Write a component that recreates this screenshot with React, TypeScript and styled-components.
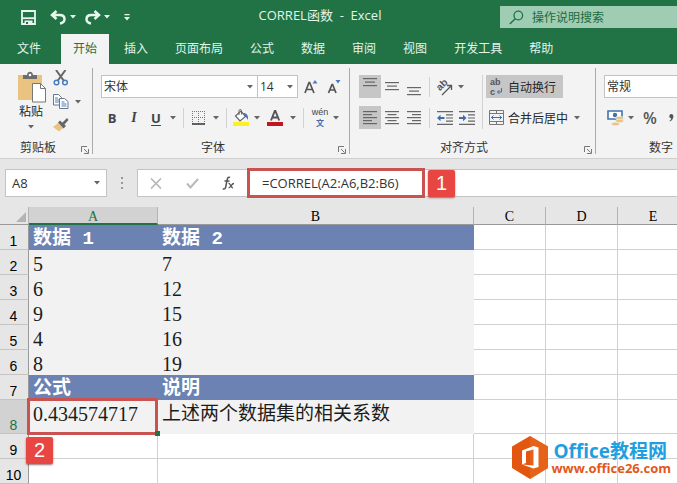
import React from "react";
import styled, { createGlobalStyle, css } from "styled-components";

const GREEN = "#217346";
const INK = "#444444";
const UI_FONT = '"Open Sans", "Noto Sans CJK SC", sans-serif';
const CELL_FONT = '"Liberation Serif", "Noto Sans CJK SC", serif';

const GlobalStyle = createGlobalStyle`
  *, *::before, *::after { box-sizing: border-box; }
  html, body { margin: 0; padding: 0; }
  body { background: #e6e6e6; font-family: ${UI_FONT}; font-size: 12px; color: #262626; overflow: hidden; }
  button, input, select { font: inherit; color: inherit; margin: 0; }
  button { border: 0; padding: 0; background: none; cursor: pointer; white-space: nowrap; }
  svg { display: block; flex: none; }
`;

/* ---------- layout ---------- */

const Window = styled.div`
  min-height: 100vh;
  display: flex;
  flex-direction: column;
  position: relative;
  overflow: hidden;
`;

const TitleBar = styled.header`
  display: flex;
  align-items: center;
  height: 34px;
  background: ${GREEN};
  color: #e4f5ea;
`;

const QuickAccess = styled.div`
  display: flex;
  align-items: center;
  width: 140px;
  padding-left: 21px;
  flex: none;
`;

const QuickButton = styled.button<{ $w: number; $gap?: number }>`
  display: flex;
  justify-content: center;
  width: ${(p) => p.$w}px;
  margin-right: ${(p) => p.$gap ?? 0}px;
  color: #e8f7ee;
`;

const DocTitle = styled.h1`
  flex: 1;
  margin: 0;
  padding-bottom: 4px;
  font-size: 13px;
  line-height: 18px;
  font-weight: 400;
  text-align: center;
  white-space: pre;
`;

const Search = styled.label`
  display: flex;
  align-items: center;
  gap: 8px;
  width: 177px;
  height: 22px;
  padding-left: 9px;
  flex: none;
  background: #9fcdb3;
  color: ${GREEN};
`;

const SearchInput = styled.input`
  flex: 1;
  min-width: 0;
  border: 0;
  padding: 0;
  background: none;
  outline: none;
  &::placeholder { color: #1d6a40; opacity: 1; }
`;

const Tabs = styled.nav`
  display: flex;
  gap: 3px;
  height: 30px;
  padding-left: 5px;
  background: ${GREEN};
`;

const Tab = styled.button<{ $active?: boolean; $file?: boolean }>`
  padding: 0 12px 2px;
  color: #e4f5ea;
  margin-right: ${(p) => (p.$file ? 5 : 0)}px;
  ${(p) => p.$active && css`background: #f3f3f3; color: ${GREEN};`}
`;

const Ribbon = styled.div`
  display: flex;
  height: 95px;
  background: #f3f3f3;
  border-bottom: 1px solid #cfcfcf;
  overflow: hidden;
`;

const Group = styled.section<{ $w: number }>`
  position: relative;
  display: flex;
  flex-direction: column;
  flex: none;
  width: ${(p) => p.$w}px;
  height: 94px;
  &::after {
    content: "";
    position: absolute;
    right: 0;
    top: 4px;
    bottom: 4px;
    width: 1px;
    background: #ababab;
  }
`;

const GroupBody = styled.div<{ $left: number; $row?: boolean }>`
  display: flex;
  flex-direction: ${(p) => (p.$row ? "row" : "column")};
  gap: ${(p) => (p.$row ? 0 : 8)}px;
  height: 74px;
  padding: ${(p) => (p.$row ? 6 : 11)}px 0 0 ${(p) => p.$left}px;
`;

const GroupFooter = styled.footer<{ $shift?: number }>`
  display: flex;
  align-items: center;
  justify-content: center;
  height: 18px;
  padding-right: ${(p) => p.$shift ?? 0}px;
  color: #333;
`;

const Launcher = styled.button`
  position: absolute;
  right: 4px;
  bottom: 4px;
`;

const Row = styled.div<{ $gap?: number; $h?: number }>`
  display: flex;
  align-items: center;
  gap: ${(p) => p.$gap ?? 0}px;
  height: ${(p) => p.$h ?? 23}px;
`;

const Column = styled.div<{ $w: number; $gap: number; $top?: number }>`
  display: flex;
  flex-direction: column;
  align-items: flex-start;
  width: ${(p) => p.$w}px;
  gap: ${(p) => p.$gap}px;
  padding-top: ${(p) => p.$top ?? 0}px;
`;

const PasteButton = styled.button`
  display: flex;
  flex-direction: column;
  align-items: center;
  width: 34px;
  line-height: 18px;
`;

const Tool = styled.button<{ $w?: number; $on?: boolean; $h?: number }>`
  display: flex;
  align-items: center;
  justify-content: center;
  flex: none;
  width: ${(p) => p.$w ?? 22}px;
  height: ${(p) => p.$h ?? 23}px;
  background: ${(p) => (p.$on ? "#c6c6c6" : "none")};
`;

const Glyph = styled.span<{ $style?: "bold" | "italic" | "underline" | "large" }>`
  font-size: 13px;
  line-height: 16px;
  color: ${INK};
  font-weight: 700;
  ${(p) => p.$style === "italic" && css`font-family: "Liberation Serif", serif; font-style: italic; font-size: 14px;`}
  ${(p) => p.$style === "underline" && css`text-decoration: underline; text-underline-offset: 2px;`}
  ${(p) => p.$style === "large" && css`font-size: 16px; font-weight: 600; color: #555;`}
`;

const TextTool = styled(Tool)`
  justify-content: flex-start;
  gap: 4px;
  padding-left: 3px;
`;

const Rule = styled.span<{ $h?: number; $m: number }>`
  flex: none;
  width: 1px;
  height: ${(p) => p.$h ?? 20}px;
  margin: 0 ${(p) => p.$m}px;
  background: #d2d2d2;
`;

const AlignColumns = styled.div`
  display: flex;
  height: 74px;
  padding: 11px 0 0 9px;
`;

const PickerShell = styled.span<{ $w: number; $joined?: boolean }>`
  position: relative;
  display: flex;
  flex: none;
  width: ${(p) => p.$w}px;
  height: 23px;
  border: 1px solid #c3c3c3;
  border-left-width: ${(p) => (p.$joined ? 0 : 1)}px;
  background: #fff;
  svg { position: absolute; right: 4px; top: 9px; pointer-events: none; }
`;

const PickerSelect = styled.select`
  appearance: none;
  width: 100%;
  border: 0;
  outline: 0;
  padding: 0 2px;
  background: none;
  color: #333;
`;

/* ---------- formula bar ---------- */

const FormulaRow = styled.div`
  display: flex;
  height: 48px;
  padding: 10px 0 10px 5px;
`;

const NameBox = styled.label`
  display: flex;
  align-items: center;
  width: 102px;
  flex: none;
  padding: 0 6px;
  border: 1px solid #c3c3c3;
  background: #fff;
`;

const NameInput = styled.input`
  flex: 1;
  min-width: 0;
  border: 0;
  padding: 0;
  outline: none;
  background: none;
  font-size: 13px;
  color: #333;
`;

const Grip = styled.span`
  display: flex;
  align-items: center;
  justify-content: center;
  width: 30px;
  flex: none;
`;

const FormulaBox = styled.div`
  position: relative;
  display: flex;
  align-items: center;
  flex: 1;
  border: 1px solid #c3c3c3;
  border-right: 0;
  background: #fff;
`;

const FormulaInput = styled.input`
  flex: 1;
  min-width: 0;
  height: 100%;
  border: 0;
  padding: 0 0 0 15px;
  outline: none;
  background: none;
  font-size: 13px;
  color: #333;
`;

/* ---------- annotations ---------- */

const frame = css`
  border: 3px solid #c95351;
  pointer-events: none;
  position: absolute;
  z-index: 2;
`;

const FormulaFrame = styled.div`
  ${frame}
  left: 109px;
  top: -2px;
  bottom: -2px;
  width: 178px;
`;

const CellFrame = styled.div`
  ${frame}
  left: -2px;
  right: -1px;
  top: -2px;
  bottom: -2px;
`;

const Badge = styled.span<{ $x: number; $y: number }>`
  position: absolute;
  z-index: 3;
  left: ${(p) => p.$x}px;
  top: ${(p) => p.$y}px;
  display: flex;
  align-items: center;
  justify-content: center;
  width: 27px;
  height: 27px;
  border-radius: 2px;
  background: #e74643;
  box-shadow: 0 1px 2px rgba(90, 20, 20, 0.6);
  color: #fff;
  font: 20px/27px "Liberation Sans", sans-serif;
`;

const FillHandle = styled.i`
  position: absolute;
  z-index: 3;
  right: -3px;
  bottom: -3px;
  width: 5px;
  height: 5px;
  background: ${GREEN};
`;

/* ---------- sheet ---------- */

const SheetArea = styled.main`
  position: relative;
  flex: 1;
  overflow: hidden;
  background: #fff;
`;

const Grid = styled.table`
  width: 100%;
  min-width: 689px;
  table-layout: fixed;
  border-collapse: separate;
  border-spacing: 0;
`;

const Col = styled.col<{ $w?: number }>`
  width: ${(p) => (p.$w ? `${p.$w}px` : "auto")};
`;

const ColHead = styled.th<{ $active?: boolean }>`
  height: 18px;
  padding: 3px 0 0;
  border-right: 1px solid #b4b4b4;
  border-bottom: 1px solid #999;
  background: #e6e6e6;
  font: 14px/14px ${CELL_FONT};
  color: #000;
  ${(p) => p.$active && css`background: #d2d2d2; color: ${GREEN}; border-bottom: 2px solid ${GREEN}; line-height: 13px;`}
`;

const Corner = styled(ColHead)`
  padding: 0 2px 2px 0;
  vertical-align: bottom;
  svg { margin-left: auto; }
`;

const RowHead = styled.th<{ $h: number; $active?: boolean }>`
  height: ${(p) => p.$h}px;
  padding: 0 1px 0 0;
  vertical-align: bottom;
  border-right: 1px solid #999;
  border-bottom: 1px solid #c4c4c4;
  background: ${(p) => (p.$active ? "#d2d2d2" : "#e6e6e6")};
  color: ${(p) => (p.$active ? GREEN : "#000")};
  font: 14px/15px "Liberation Sans", sans-serif;
`;

type Tone = "plain" | "head" | "body";

const Cell = styled.td<{ $tone: Tone; $small?: boolean }>`
  position: relative;
  padding: 0 0 0 4px;
  vertical-align: bottom;
  white-space: nowrap;
  font-family: ${CELL_FONT};
  font-size: ${(p) => (p.$small ? 19 : 20)}px;
  line-height: 20px;
  color: #1c1c1c;
  border-right: 1px solid #d0d0d0;
  border-bottom: 1px solid #d0d0d0;
  ${(p) => p.$tone === "body" && css`background: #f2f2f2; border-color: #f2f2f2;`}
  ${(p) =>
    p.$tone === "head" &&
    css`
      background: #6c82b3;
      border-color: #6c82b3;
      color: #fff;
      font-family: "Liberation Mono", "Noto Sans CJK SC", monospace;
      font-size: 19px;
      font-weight: 700;
    `}
`;

const TallCell = styled(Cell)`
  vertical-align: top;
  padding-top: 4px;
`;

const Watermark = styled.a`
  position: absolute;
  right: 6px;
  bottom: 5px;
  z-index: 4;
  display: flex;
  align-items: center;
  gap: 3px;
  text-decoration: none;
  font-family: "Open Sans", "Noto Sans CJK SC", sans-serif;
  font-weight: 700;
`;

const WatermarkText = styled.span`
  display: flex;
  flex-direction: column;
`;

const Brand = styled.span`
  font-size: 19px;
  line-height: 20px;
  color: #1f9fe0;
  padding-left: 2px;
`;

const Site = styled.span`
  font-size: 13px;
  line-height: 14px;
  color: #e2581a;
`;

/* ---------- icons ---------- */

const Caret = ({ color = "#666" }: { color?: string }) => (
  <svg width="6" height="4" viewBox="0 0 6 4" aria-hidden="true"><path d="M0 0h6L3 3.5z" fill={color} /></svg>
);

const SaveIcon = () => (
  <svg width="15" height="15" viewBox="0 0 15 15"><path d="M1 1h13v13H1z" fill="none" stroke="currentColor" strokeWidth="1.8" /><path d="M1 8.200h13" stroke="currentColor" strokeWidth="1.800" /><path d="M3.500 14v-3.500h8V14z" fill="currentColor" /><path d="M5 12h2v2H5z" fill={GREEN} /></svg>
);
const UndoIcon = ({ flip = false }: { flip?: boolean }) => (
  <svg width="16" height="15" viewBox="0 0 16 15"><g transform={flip ? "matrix(-1 0 0 1 16 0)" : undefined} fill="none" stroke="currentColor" strokeWidth="2.5"><path d="M6.500 1 2 5l4.500 4M2 5h7.500c3 0 5 1.500 5 4.200 0 2.600-2 3.800-4.500 4.300" /></g></svg>
);
const CustomizeIcon = () => (
  <svg width="6" height="7" viewBox="0 0 6 7"><path d="M.5 0h5v1.200h-5zM0 3h6L3 6.500z" fill="currentColor" /></svg>
);
const SearchIcon = () => (
  <svg width="15" height="15" viewBox="0 0 15 15"><circle cx="9.300" cy="5.500" r="4.300" fill="none" stroke="currentColor" strokeWidth="1.300" /><path d="M6.200 8.700.8 14" stroke="currentColor" strokeWidth="1.500" /></svg>
);
const LauncherIcon = () => (
  <svg width="8" height="8" viewBox="0 0 8 8" fill="none" stroke="#777"><path d="M.5 6V.5H6M3 3l3.500 3.500M7.500 3v4.500H3" /></svg>
);
const PasteIcon = () => (
  <svg width="29" height="32" viewBox="0 0 29 32"><path d="M1 4h24v25H1z" fill="#eac282" /><path d="M6 8V4h4c0-4.500 6-4.500 6 0h4v4z" fill="#6d6d6d" /><circle cx="13" cy="4" r="1.300" fill="#fff" /><path d="M15.500 12.500h8l5 5v13.500h-13z" fill="#fff" stroke="#777" /><path d="M23.500 12.500v5h5" fill="none" stroke="#777" /></svg>
);
const CutIcon = () => (
  <svg width="16" height="16" viewBox="0 0 16 16" fill="none"><path d="m3 0 8 11M12.500 0l-8 11" stroke="#666" strokeWidth="2" /><circle cx="3.500" cy="12.500" r="2.300" stroke="#4a7ebb" strokeWidth="1.500" /><circle cx="12" cy="12.500" r="2.300" stroke="#4a7ebb" strokeWidth="1.500" /></svg>
);
const CopyIcon = () => (
  <svg width="16" height="15" viewBox="0 0 16 15" stroke="#6b7786"><path d="M.5.500h5l3 3v7.500h-8z" fill="#fff" /><path d="M2 4h3M2 6h4M2 8h4" stroke="#4a7ebb" /><path d="M6.500 4.500h5l3.500 3v7h-8.500z" fill="#fff" /><path d="M8.500 8h3M8.500 10h5M8.500 12h5" stroke="#4a7ebb" /></svg>
);
const BrushIcon = () => (
  <svg width="16" height="15" viewBox="0 0 16 15"><path d="m0 10 5-4 5 5-4 3.500z" fill="#eac282" /><path d="m5 5.500 2-2 6 5.500-2.500 2.500z" fill="#666" /><path d="m9 6 5-5 1.500 2-4.500 5z" fill="#666" /></svg>
);
const FontStepIcon = ({ down = false }: { down?: boolean }) => (
  <svg width="14" height="15" viewBox="0 0 14 15"><path d={down ? "M1.500 14 5 5.500h.6L9 14M2.900 11h5" : "M1 14 5 3.500h.6L10 14M2.500 10.500h6"} fill="none" stroke="#555" strokeWidth="1.700" /><path d={down ? "M8.500 1h5L11 4.500z" : "M8.500 4.500h5L11 1z"} fill="#4a7ebb" /></svg>
);
const BorderIcon = () => (
  <svg width="14" height="14" viewBox="0 0 14 14" fill="none" stroke="#777"><path d="M0 .5h13M0 6.500h13M.5 0v13M6.500 0v13M12.500 0v13" strokeDasharray="1 1" /><path d="M0 13h13" stroke="#333" strokeWidth="1.500" /></svg>
);
const FillIcon = () => (
  <svg width="17" height="17" viewBox="0 0 17 17"><path d="M2.500 7 8 2l4.500 5.500L7 12z" fill="#fff" stroke="#666" strokeWidth="1.200" /><path d="M6 6V1.500C6 .3 8.500.3 8.500 1.500v4" fill="none" stroke="#666" /><path d="M10.500 4c3 0 5 2 4.500 7-1-2-2-3-3-3.500z" fill="#4a6fb3" /><path d="M0 13h16v4H0z" fill="#fbf122" /></svg>
);
const FontColorIcon = () => (
  <svg width="17" height="17" viewBox="0 0 17 17"><path d="M4 11.500 7.800 2h.6l3.800 9.500M5.500 8.500h5" fill="none" stroke="#555" strokeWidth="1.900" /><path d="M0 13h16v4H0z" fill="#c3151d" /></svg>
);
const LinesIcon = ({ widths, top, align }: { widths: number[]; top: number; align: "l" | "c" | "r" }) => (
  <svg width="14" height="19" viewBox="0 0 14 19" fill="#666">
    {widths.map((w, i) => (
      <rect key={i} x={align === "l" ? 0 : align === "c" ? (14 - w) / 2 : 14 - w} y={top + i * (widths.length === 3 ? 3.5 : 3)} width={w} height="1.200" />
    ))}
  </svg>
);
const IndentIcon = ({ right = false }: { right?: boolean }) => (
  <svg width="16" height="14" viewBox="0 0 16 14"><path d="M0 .6h16M9 3.800h7M9 7h7M9 10.200h7M0 13.400h16" stroke="#666" strokeWidth="1.200" /><path transform={right ? "matrix(-1 0 0 1 7.500 0)" : undefined} d="M0 7l3.500-3.200v2.200H7.500v2H3.500v2.200z" fill="#3d6fb0" /></svg>
);
const MergeIcon = () => (
  <svg width="15" height="15" viewBox="0 0 15 15" fill="none" stroke="#777"><path d="M.5.500h14v14H.5zM.5 3.500h14M.5 11.500h14M7.500 0v3.500M7.500 11.500V15" /><path d="M2 7.500h11M4.500 5.500l-2 2 2 2M10.500 5.500l2 2-2 2" stroke="#3d6fb0" /></svg>
);
const OrientationIcon = () => (
  <svg width="20" height="20" viewBox="0 0 20 20"><text transform="rotate(-45 8 8)" x="8" y="11" textAnchor="middle" fontSize="10" fontWeight="700" fontFamily="Liberation Sans, sans-serif" fill="#555">ab</text><path d="m8 18 9-9M13 8.500h4.500V13" fill="none" stroke="#555" strokeWidth="1.300" /></svg>
);
const WrapIcon = () => (
  <svg width="15" height="23" viewBox="0 0 15 23"><g fontSize="9" fontWeight="700" fontFamily="Liberation Sans, sans-serif" fill="#555"><text x="1" y="10">ab</text><text x="1" y="20">c</text></g><path d="M12.500 13v4H8.500M10.500 15l-2 2 2 2" fill="none" stroke="#3d6fb0" /></svg>
);
const PhoneticIcon = () => (
  <svg width="20" height="23" viewBox="0 0 20 23"><text x="10" y="9" textAnchor="middle" fontSize="9" fontFamily="Liberation Sans, sans-serif" fill="#444">wén</text><text x="10" y="20" textAnchor="middle" fontSize="8" fontWeight="700" fontFamily="Noto Sans CJK SC, sans-serif" fill="#3d6fb0">文</text></svg>
);
const CurrencyIcon = () => (
  <svg width="17" height="16" viewBox="0 0 17 16"><path d="M1 1h14v8H1z" fill="#fff" stroke="#3f72ab" strokeWidth="1.600" /><circle cx="8" cy="5" r="2.200" fill="#3f72ab" /><g fill="#eac282" stroke="#f3f3f3" strokeWidth=".6"><ellipse cx="12.500" cy="8" rx="4" ry="1.700" /><ellipse cx="12.500" cy="11" rx="4" ry="1.700" /><ellipse cx="8.500" cy="14" rx="4" ry="1.700" /></g></svg>
);
const CommaIcon = () => (
  <svg width="5" height="8" viewBox="0 0 5 8"><path d="M2.300 0C5.500 0 5 5.500 1 7.500L.5 6.800C1.800 6 2.200 5 2.100 4.200-.3 4.200-.3 0 2.300 0z" fill="#555" /></svg>
);
const GripIcon = () => (
  <svg width="2" height="12" viewBox="0 0 2 12" fill="#999"><path d="M0 0h2v2H0zM0 5h2v2H0zM0 10h2v2H0z" /></svg>
);
const CrossIcon = () => (
  <svg width="12" height="11" viewBox="0 0 12 11"><path d="m1 .5 10 10M11 .5l-10 10" stroke="#b9b9b9" strokeWidth="1.700" /></svg>
);
const CheckIcon = () => (
  <svg width="13" height="11" viewBox="0 0 13 11"><path d="m1 5.500 3.500 4L12 1" fill="none" stroke="#b9b9b9" strokeWidth="2" /></svg>
);
const FxIcon = () => (
  <svg width="13" height="15" viewBox="0 0 13 15" fill="none" stroke="#555"><path d="M8 1.500C6 .5 5.500 2 5 4.500L3.800 10.500C3.400 12.800 2.600 13.500.8 12.800M2.500 5h5" strokeWidth="1.500" /><path d="M6.500 7.500c2-.8 2 4.500 4.500 4.300M12 7.500c-2.500-.3-3 4.500-5.500 4.300" strokeWidth="1.300" /></svg>
);
const CornerIcon = () => (
  <svg width="10" height="10" viewBox="0 0 10 10"><path d="M10 0v10H0z" fill="#b4b4b4" /></svg>
);
const OfficeLogo = () => (
  <svg width="36" height="43" viewBox="0 0 36 43"><path d="M18 0 36 10.500v21.500L18 43 0 32V10.500z" fill="#e2560f" /><path d="M18 0 36 10.500v21.500L18 43z" fill="#ea6a1f" opacity=".6" /><path d="M10 14.500 21.500 10l5 1.500v19.500l-5 1.500L10 28.500l11.500 1V13.500L14 15.500v11.500l-4 1.500z" fill="#fff" /></svg>
);

/* ---------- data ---------- */

const TABS = ["文件", "开始", "插入", "页面布局", "公式", "数据", "审阅", "视图", "开发工具", "帮助"];
const COLUMNS = ["A", "B", "C", "D", "E"];
const ROWS: { n: number; h: number; tone: Tone; a?: string; b?: string }[] = [
  { n: 1, h: 25, tone: "head", a: "数据 1", b: "数据 2" },
  { n: 2, h: 25, tone: "body", a: "5", b: "7" },
  { n: 3, h: 25, tone: "body", a: "6", b: "12" },
  { n: 4, h: 25, tone: "body", a: "9", b: "15" },
  { n: 5, h: 25, tone: "body", a: "4", b: "16" },
  { n: 6, h: 25, tone: "body", a: "8", b: "19" },
  { n: 7, h: 25, tone: "head", a: "公式", b: "说明" },
  { n: 8, h: 34, tone: "body", a: "0.434574717", b: "上述两个数据集的相关系数" },
  { n: 9, h: 25, tone: "plain" },
  { n: 10, h: 25, tone: "plain" },
];

function Picker({ label, value, width, joined }: { label: string; value: string; width: number; joined?: boolean }) {
  return (
    <PickerShell $w={width} $joined={joined}>
      <PickerSelect aria-label={label} defaultValue={value}><option>{value}</option></PickerSelect>
      <Caret />
    </PickerShell>
  );
}

function GroupLabel({ text, launcher = true, shift }: { text: string; launcher?: boolean; shift?: number }) {
  return (
    <GroupFooter $shift={shift}>
      {text}
      {launcher && <Launcher aria-label={`${text}设置`}><LauncherIcon /></Launcher>}
    </GroupFooter>
  );
}

export default function App() {
  return (
    <Window>
      <GlobalStyle />
      <TitleBar>
        <QuickAccess>
          <QuickButton $w={15} $gap={14} aria-label="保存"><SaveIcon /></QuickButton>
          <QuickButton $w={16} $gap={4} aria-label="撤消"><UndoIcon /></QuickButton>
          <QuickButton $w={6} $gap={9} aria-label="撤消选项"><Caret color="#e8f7ee" /></QuickButton>
          <QuickButton $w={16} $gap={3} aria-label="恢复"><UndoIcon flip /></QuickButton>
          <QuickButton $w={6} $gap={14} aria-label="恢复选项"><Caret color="#e8f7ee" /></QuickButton>
          <QuickButton $w={6} aria-label="自定义"><CustomizeIcon /></QuickButton>
        </QuickAccess>
        <DocTitle>{"CORREL函数  -  Excel"}</DocTitle>
        <Search>
          <SearchIcon />
          <SearchInput aria-label="操作说明搜索" placeholder="操作说明搜索" />
        </Search>
      </TitleBar>

      <Tabs>
        {TABS.map((t, i) => <Tab key={t} $file={i === 0} $active={i === 1}>{t}</Tab>)}
      </Tabs>

      <Ribbon>
        <Group $w={93}>
          <GroupBody $left={14} $row>
            <Column $w={39} $gap={0} $top={1}>
              <PasteButton><PasteIcon />粘贴<Tool as="span" $w={6} $h={12}><Caret /></Tool></PasteButton>
            </Column>
            <Column $w={30} $gap={8}>
              <Tool $w={16} $h={16} aria-label="剪切"><CutIcon /></Tool>
              <Row $h={15} $gap={6}>
                <Tool $w={16} $h={15} aria-label="复制"><CopyIcon /></Tool>
                <Tool $w={6} $h={15} aria-label="复制选项"><Caret /></Tool>
              </Row>
              <Tool $w={16} $h={15} aria-label="格式刷"><BrushIcon /></Tool>
            </Column>
          </GroupBody>
          <GroupLabel text="剪贴板" shift={17} />
        </Group>

        <Group $w={257}>
          <GroupBody $left={8}>
            <Row>
              <Picker label="字体" value="宋体" width={157} />
              <Picker label="字号" value="14" width={40} joined />
              <Tool $w={26} aria-label="增大字号"><FontStepIcon /></Tool>
              <Tool $w={20} aria-label="减小字号"><FontStepIcon down /></Tool>
            </Row>
            <Row>
              <Tool aria-label="加粗"><Glyph $style="bold">B</Glyph></Tool>
              <Tool aria-label="倾斜"><Glyph $style="italic">I</Glyph></Tool>
              <Tool aria-label="下划线"><Glyph $style="underline">U</Glyph></Tool>
              <Tool $w={12} aria-label="下划线选项"><Caret /></Tool>
              <Rule $m={4} />
              <Tool $w={22} aria-label="边框"><BorderIcon /></Tool>
              <Tool $w={12} aria-label="边框选项"><Caret /></Tool>
              <Rule $m={4} />
              <Tool $w={20} aria-label="填充颜色"><FillIcon /></Tool>
              <Tool $w={12} aria-label="填充选项"><Caret /></Tool>
              <Tool $w={24} aria-label="字体颜色"><FontColorIcon /></Tool>
              <Tool $w={12} aria-label="颜色选项"><Caret /></Tool>
              <Rule $m={4} />
              <Tool $w={23} aria-label="拼音"><PhoneticIcon /></Tool>
              <Tool $w={10} aria-label="拼音选项"><Caret /></Tool>
            </Row>
          </GroupBody>
          <GroupLabel text="字体" shift={17} />
        </Group>

        <Group $w={246}>
          <AlignColumns>
            <Column $w={123} $gap={8}>
              <Row>
                <Tool $on aria-label="顶端对齐"><LinesIcon widths={[14, 10, 14]} top={1} align="c" /></Tool>
                <Tool aria-label="垂直居中"><LinesIcon widths={[14, 10, 14]} top={5} align="c" /></Tool>
                <Tool aria-label="底端对齐"><LinesIcon widths={[14, 10, 14]} top={10} align="c" /></Tool>
                <Rule $m={4} />
                <Tool $w={20} aria-label="方向"><OrientationIcon /></Tool>
                <Tool $w={14} aria-label="方向选项"><Caret /></Tool>
              </Row>
              <Row>
                <Tool $on aria-label="左对齐"><LinesIcon widths={[14, 9, 14, 9, 14]} top={3} align="l" /></Tool>
                <Tool aria-label="居中"><LinesIcon widths={[14, 9, 14, 9, 14]} top={3} align="c" /></Tool>
                <Tool aria-label="右对齐"><LinesIcon widths={[14, 9, 14, 9, 14]} top={3} align="r" /></Tool>
                <Rule $m={4} />
                <Tool aria-label="减少缩进"><IndentIcon /></Tool>
                <Tool aria-label="增加缩进"><IndentIcon right /></Tool>
              </Row>
            </Column>
            <Rule $h={54} $m={0} />
            <Column $w={105} $gap={8}>
              <Row><Rule $h={0} $m={1} /><TextTool $w={77} $on><WrapIcon />自动换行</TextTool></Row>
              <Row>
                <Rule $h={0} $m={1} />
                <TextTool $w={83}><MergeIcon />合并后居中</TextTool>
                <Tool $w={16} aria-label="合并选项"><Caret /></Tool>
              </Row>
            </Column>
          </AlignColumns>
          <GroupLabel text="对齐方式" shift={18} />
        </Group>

        <Group $w={130}>
          <GroupBody $left={8}>
            <Row><Picker label="数字格式" value="常规" width={110} /></Row>
            <Row>
              <Tool aria-label="会计格式"><CurrencyIcon /></Tool>
              <Tool $w={10} aria-label="会计选项"><Caret /></Tool>
              <Tool $w={28} aria-label="百分比"><Glyph $style="large">%</Glyph></Tool>
              <Tool $w={14} aria-label="千位分隔"><CommaIcon /></Tool>
            </Row>
          </GroupBody>
          <GroupLabel text="数字" launcher={false} />
        </Group>
      </Ribbon>

      <FormulaRow>
        <NameBox>
          <NameInput aria-label="名称框" defaultValue="A8" />
          <Caret />
        </NameBox>
        <Grip><GripIcon /></Grip>
        <FormulaBox>
          <Tool $w={36} aria-label="取消"><CrossIcon /></Tool>
          <Tool $w={36} aria-label="输入"><CheckIcon /></Tool>
          <Tool $w={37} aria-label="插入函数"><FxIcon /></Tool>
          <FormulaInput aria-label="编辑栏" defaultValue="=CORREL(A2:A6,B2:B6)" />
          <FormulaFrame />
          <Badge $x={290} $y={0}>1</Badge>
        </FormulaBox>
      </FormulaRow>

      <SheetArea>
        <Grid>
          <colgroup>
            <Col $w={29} /><Col $w={129} /><Col $w={316} /><Col $w={72} /><Col $w={72} /><Col $w={71} /><Col />
          </colgroup>
          <thead>
            <tr>
              <Corner aria-label="全选"><CornerIcon /></Corner>
              {COLUMNS.map((c) => <ColHead key={c} scope="col" $active={c === "A"}>{c}</ColHead>)}
              <ColHead />
            </tr>
          </thead>
          <tbody>
            {ROWS.map((r) => {
              const C = r.n === 8 ? TallCell : Cell;
              return (
                <tr key={r.n}>
                  <RowHead scope="row" $h={r.h} $active={r.n === 8}>{r.n}</RowHead>
                  <C $tone={r.tone}>
                    {r.a}
                    {r.n === 8 && (
                      <>
                        <CellFrame />
                        <FillHandle />
                        <Badge $x={-3} $y={37}>2</Badge>
                      </>
                    )}
                  </C>
                  <C $tone={r.tone} $small={r.n === 8}>{r.b}</C>
                  <Cell $tone="plain" /><Cell $tone="plain" /><Cell $tone="plain" /><Cell $tone="plain" />
                </tr>
              );
            })}
          </tbody>
        </Grid>
      </SheetArea>

      <Watermark href="#office">
        <OfficeLogo />
        <WatermarkText>
          <Brand>Office教程网</Brand>
          <Site>www.office26.com</Site>
        </WatermarkText>
      </Watermark>
    </Window>
  );
}
